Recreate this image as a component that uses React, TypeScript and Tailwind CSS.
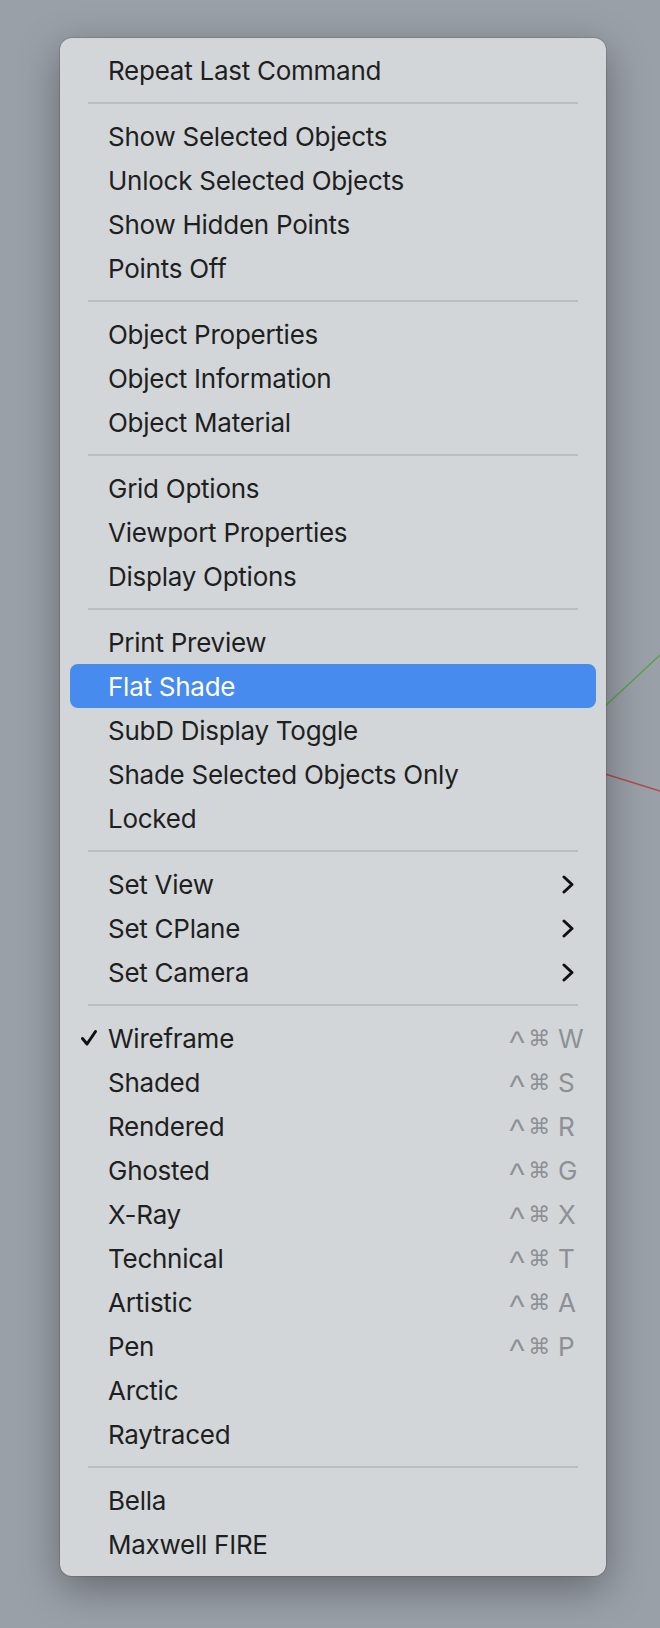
import React from 'react';

type Item =
  | { kind: 'sep' }
  | {
      kind: 'item';
      label: string;
      checked?: boolean;
      active?: boolean;
      submenu?: boolean;
      key?: string;
    };

const items: Item[] = [
  { kind: 'item', label: 'Repeat Last Command' },
  { kind: 'sep' },
  { kind: 'item', label: 'Show Selected Objects' },
  { kind: 'item', label: 'Unlock Selected Objects' },
  { kind: 'item', label: 'Show Hidden Points' },
  { kind: 'item', label: 'Points Off' },
  { kind: 'sep' },
  { kind: 'item', label: 'Object Properties' },
  { kind: 'item', label: 'Object Information' },
  { kind: 'item', label: 'Object Material' },
  { kind: 'sep' },
  { kind: 'item', label: 'Grid Options' },
  { kind: 'item', label: 'Viewport Properties' },
  { kind: 'item', label: 'Display Options' },
  { kind: 'sep' },
  { kind: 'item', label: 'Print Preview' },
  { kind: 'item', label: 'Flat Shade', active: true },
  { kind: 'item', label: 'SubD Display Toggle' },
  { kind: 'item', label: 'Shade Selected Objects Only' },
  { kind: 'item', label: 'Locked' },
  { kind: 'sep' },
  { kind: 'item', label: 'Set View', submenu: true },
  { kind: 'item', label: 'Set CPlane', submenu: true },
  { kind: 'item', label: 'Set Camera', submenu: true },
  { kind: 'sep' },
  { kind: 'item', label: 'Wireframe', checked: true, key: 'W' },
  { kind: 'item', label: 'Shaded', key: 'S' },
  { kind: 'item', label: 'Rendered', key: 'R' },
  { kind: 'item', label: 'Ghosted', key: 'G' },
  { kind: 'item', label: 'X-Ray', key: 'X' },
  { kind: 'item', label: 'Technical', key: 'T' },
  { kind: 'item', label: 'Artistic', key: 'A' },
  { kind: 'item', label: 'Pen', key: 'P' },
  { kind: 'item', label: 'Arctic' },
  { kind: 'item', label: 'Raytraced' },
  { kind: 'sep' },
  { kind: 'item', label: 'Bella' },
  { kind: 'item', label: 'Maxwell FIRE' },
];

function Check() {
  return (
    <svg width="18" height="18" viewBox="0 0 18 18" className="absolute left-[10px] top-[13px]">
      <path d="M2.5 9.5 L7 15 L15.5 2.5" fill="none" stroke="#111" strokeWidth="3" strokeLinecap="round" strokeLinejoin="round" />
    </svg>
  );
}

function Chevron() {
  return (
    <svg width="12" height="19" viewBox="0 0 12 19">
      <path d="M2 2 L10 9.5 L2 17" fill="none" stroke="#111" strokeWidth="3" strokeLinecap="round" strokeLinejoin="round" />
    </svg>
  );
}

export default function App() {
  return (
    <div className="relative w-[660px] h-[1628px] overflow-hidden bg-[#9aa0a8] font-['Inter','Liberation_Sans',sans-serif]">
      {/* viewport axes peeking out behind the menu */}
      <svg className="absolute left-0 top-0" width="660" height="1628">
        <line x1="560" y1="748" x2="660" y2="655" stroke="#58a447" strokeWidth="1.5" />
        <line x1="560" y1="760" x2="660" y2="791" stroke="#b04a4c" strokeWidth="1.5" />
      </svg>

      <div className="relative pt-[38px] pl-[60px]">
        <div className="w-[546px] rounded-[12px] bg-[#d3d6d9] py-[10px] shadow-[0_0_0_1px_rgba(0,0,0,0.12),0_12px_40px_rgba(0,0,0,0.35)]">
          {items.map((it, i) =>
            it.kind === 'sep' ? (
              <div key={i} className="h-[22px] flex items-center px-[28px]">
                <div className="h-[2px] w-full bg-[#babdc1]" />
              </div>
            ) : (
              <div
                key={i}
                className={
                  'relative mx-[10px] h-[44px] rounded-[8px] pl-[38px] flex items-center justify-between text-[26px] tracking-[-0.01em] ' +
                  (it.active ? 'bg-[#478bef] text-white' : 'text-[#1e1f21]')
                }
              >
                {it.checked && <Check />}
                <span>{it.label}</span>
                {it.submenu && (
                  <span className="pr-[22px] flex items-center">
                    <Chevron />
                  </span>
                )}
                {it.key && (
                  <span className="pr-[18px] flex items-center text-[#8d9095]">
                    <span className="font-['Liberation_Sans',sans-serif] text-[32px] leading-none mr-[4px] relative top-[4px]">^</span>
                    <span className="font-['DejaVu_Sans',sans-serif] text-[22px] mr-[8px]">⌘</span>
                    <span className="w-[20px]">{it.key}</span>
                  </span>
                )}
              </div>
            )
          )}
        </div>
      </div>
    </div>
  );
}
